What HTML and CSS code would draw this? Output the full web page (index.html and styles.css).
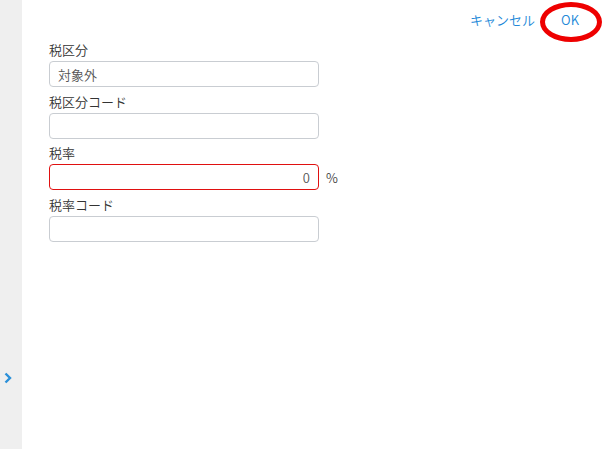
FILE: index.html
```html
<!DOCTYPE html>
<html lang="ja">
<head>
<meta charset="utf-8">
<link rel="stylesheet" href="styles.css">
</head>
<body>
<div class="app">
  <aside class="sidebar">
    <svg class="chevron" width="8" height="12" viewBox="0 0 8 12"><path d="M1.5 1.5 L6 6 L1.5 10.5" fill="none" stroke="#2b90d9" stroke-width="2.4"/></svg>
  </aside>
  <main class="main">
    <header class="toolbar">
      <button class="btn">キャンセル</button>
      <button class="btn">OK</button>
      <span class="mark"></span>
    </header>
    <form class="form">
      <div class="field">
        <label class="label">税区分</label>
        <div class="row"><input class="input" value="対象外"></div>
      </div>
      <div class="field">
        <label class="label">税区分コード</label>
        <div class="row"><input class="input" value=""></div>
      </div>
      <div class="field">
        <label class="label">税率</label>
        <div class="row"><input class="input input-error num" value="0"><span class="unit">%</span></div>
      </div>
      <div class="field">
        <label class="label">税率コード</label>
        <div class="row"><input class="input" value=""></div>
      </div>
    </form>
  </main>
</div>
</body>
</html>
```

FILE: styles.css
```css
html, body {
  margin: 0;
  padding: 0;
  height: 100%;
  background: #fff;
  font-family: "Noto Sans CJK JP", "Noto Sans", sans-serif;
  font-size: 13px;
  font-weight: 350;
  color: #333;
}
.app {
  display: flex;
  height: 449px;
}
.sidebar {
  width: 22px;
  background: #efefef;
  display: flex;
  flex-direction: column;
  justify-content: flex-start;
  padding-top: 372px;
  box-sizing: border-box;
  align-items: flex-start;
}
.chevron {
  margin-left: 4px;
  display: block;
}
.main {
  flex: 1;
  position: relative;
}
.toolbar {
  height: 38px;
  display: flex;
  justify-content: flex-end;
  align-items: center;
  padding-right: 20px;
  padding-top: 1px;
  box-sizing: border-box;
}
.btn {
  background: none;
  border: none;
  font-family: inherit;
  font-size: 13px;
  font-weight: 350;
  color: #2288d8;
  padding: 0 13px;
  line-height: 20px;
  cursor: pointer;
}
.mark {
  position: absolute;
  left: 518px;
  top: 2px;
  width: 62px;
  height: 40px;
  border: 5px solid #ee0000;
  border-radius: 50%;
  box-sizing: border-box;
}
.form {
  padding-left: 27px;
  padding-top: 1px;
}
.field {
  margin-bottom: 3.5px;
}
.label {
  display: block;
  line-height: 22px;
  height: 22px;
  color: #333;
}
.row {
  display: flex;
  align-items: center;
}
.input {
  width: 270px;
  height: 26px;
  box-sizing: border-box;
  border: 1px solid #c9cdd2;
  border-radius: 4px;
  padding: 0 8px;
  font-family: inherit;
  font-size: 13px;
  font-weight: 350;
  color: #555;
  outline: none;
}
.input-error {
  border-color: #e01010;
}
.num {
  text-align: right;
}
.unit {
  margin-left: 7px;
  color: #444;
}
```
